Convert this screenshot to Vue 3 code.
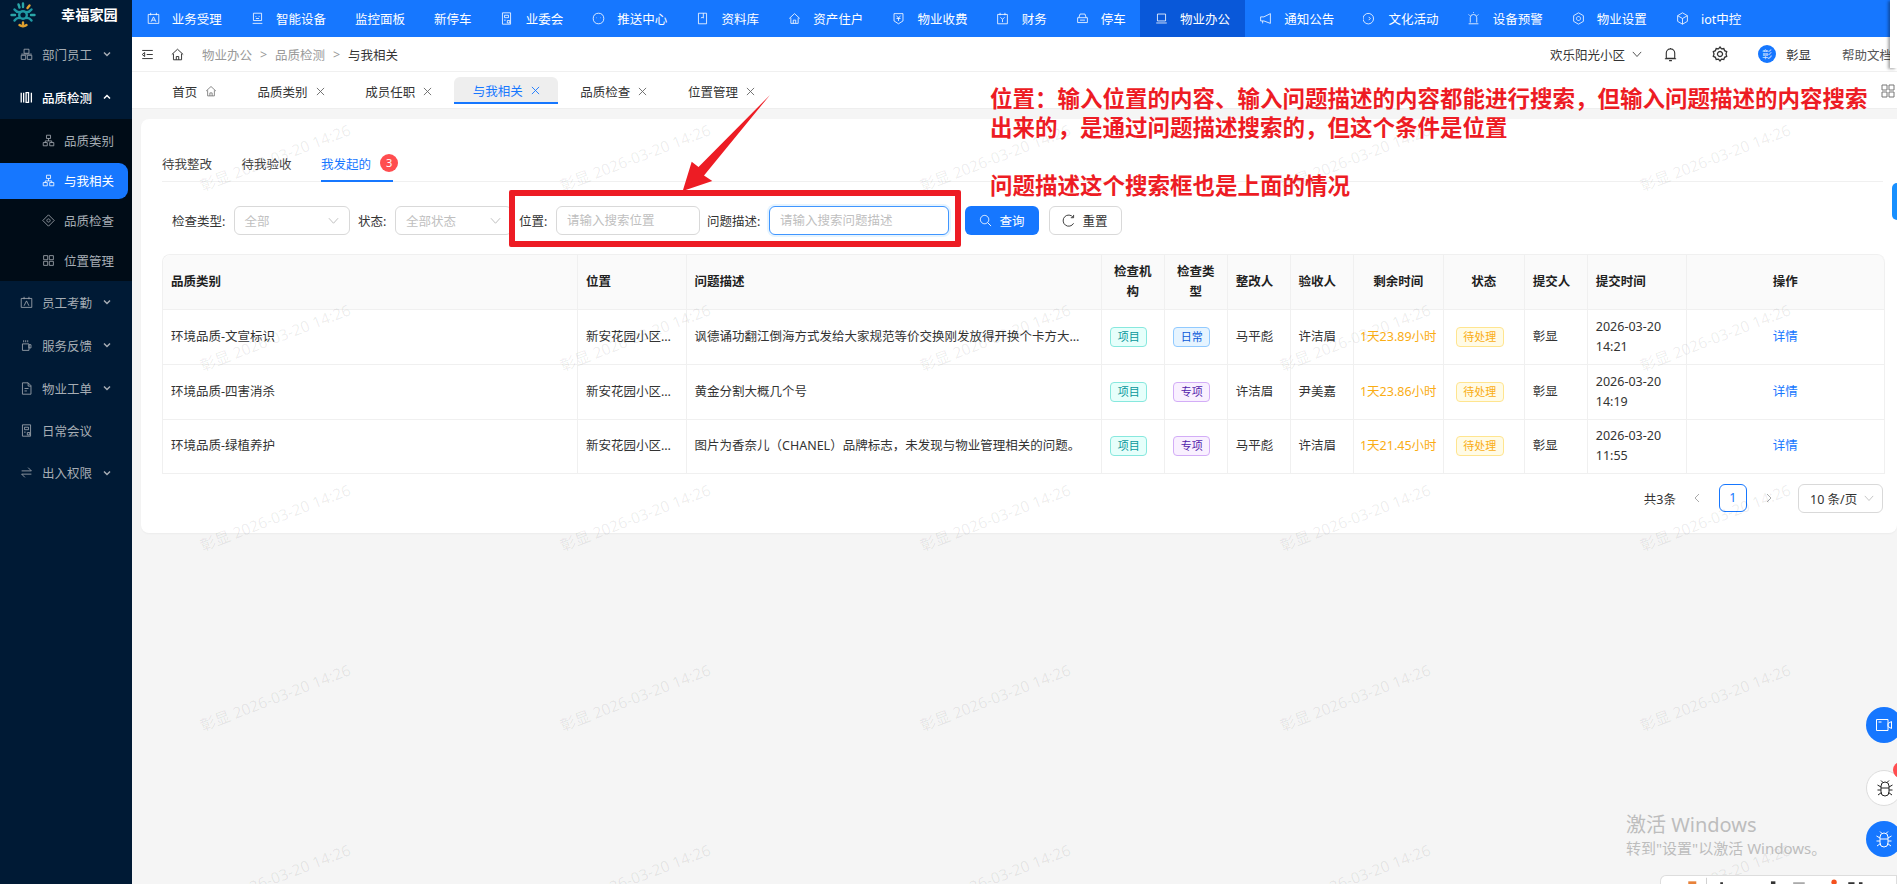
<script setup>
const nav = [
  { t: '业务受理', i: 'cal' }, { t: '智能设备', i: 'face' }, { t: '监控面板' }, { t: '新停车' },
  { t: '业委会', i: 'doc' }, { t: '推送中心', i: 'chat' }, { t: '资料库', i: 'book' }, { t: '资产住户', i: 'home' },
  { t: '物业收费', i: 'yen' }, { t: '财务', i: 'fin' }, { t: '停车', i: 'car' }, { t: '物业办公', i: 'laptop', on: true },
  { t: '通知公告', i: 'horn' }, { t: '文化活动', i: 'shield' }, { t: '设备预警', i: 'alarm' }, { t: '物业设置', i: 'gear' }, { t: 'iot中控', i: 'cube' }
]
const paths = {
  cal: 'M1.5 3h13v11h-13zM4.500 1v3M11.500 1v3M5 12l3-6 3 6M6 10h4',
  face: 'M3 1.500h10v9H3zM6 5v1M10 5v1M6 8h4M2 14h12',
  doc: 'M3 1h10v14H3zM5.500 4h5v3h-5zM9 10.500h3v3H9zM5 10h2',
  chat: 'M8 1.500c4 0 6.500 2.500 6.500 6.500s-2.500 6.500-6.500 6.500S1.500 12 1.500 8 4 1.500 8 1.500zM5.500 7v.5M10.500 7v.5',
  book: 'M3 1.500h10v13H3zM9 1.500v6l-1.500-1-1.500 1',
  home: 'M1.500 8 8 2l6.500 6M3.500 7v7h9V7M6.500 14v-4h3v4',
  yen: 'M2.500 2h11v9l-5.500 3.500L2.500 11zM5.500 4.500 8 7.500l2.500-3M5.500 8h5M8 7.500V11',
  fin: 'M2 3h12v11.500H2zM5 1v3M11 1v3M5.500 6.500 8 9l2.500-2.500M8 9v3.500',
  car: 'M3.500 7 5 2.500h6L12.500 7M2 7h12v6H2zM5 10h6',
  laptop: 'M3 2.500h10v8.500H3zM1.500 13.500h13',
  horn: 'M14 2v12L6 11H2V6h4zM4.500 11v3',
  shield: 'M2 3.500 4.500 2a6.500 6.500 0 1 1-2.500 1.500zM7 6l2 2-2 2',
  alarm: 'M4 13V7a4 4 0 0 1 8 0v6M2 14.500h12M8 1V0M2 3l1.500 1.500M14 3l-1.500 1.500',
  gear: 'M8 1l6 3.500v7L8 15l-6-3.500v-7zM8 5.500a2.500 2.500 0 1 0 .01 0z',
  cube: 'M8 1l6 3.500v7L8 15l-6-3.500v-7zM2 4.500 8 8l6-3.500M8 8v7'
}
const side1 = [
  { t: '部门员工', i: 'M5 1.500h6v5H5zM1.500 9h5.500v5H1.500zM9 9h5.500v5H9zM1.500 7.500h13' }
]
const side2 = [
  { t: '品质类别', i: 'org' }, { t: '与我相关', i: 'org', on: true }, { t: '品质检查', i: 'dia' }, { t: '位置管理', i: 'grid' }
]
const subPaths = {
  org: 'M5.500 1.500h5v4h-5zM8 5.500v3M1.500 10.500h5v4h-5zM9.500 10.500h5v4h-5zM4 10.500v-2h8v2',
  dia: 'M8 1l7 7-7 7-7-7zM8 6a2 2 0 1 0 .01 0z',
  grid: 'M2 2h5v5H2zM9 2h5v5H9zM2 9h5v5H2zM9 9h5v5H9z'
}
const side3 = [
  { t: '员工考勤', i: 'M1.500 3h13v11h-13zM5 1v3M11 1v3M5 12l3-6 3 6', c: true },
  { t: '服务反馈', i: 'M3 6h8v8H3zM11 7h2.500v4H11zM4.500 1.500v2.500M7 1.500v2.500M9.500 1.500v2.500', c: true },
  { t: '物业工单', i: 'M3 1h7l3.500 3.500V15H3zM10 1v4h3.500M5.500 8h5M5.500 11h3', c: true },
  { t: '日常会议', i: 'M3 1h10v14H3zM5.500 4h5v3h-5zM9 10.500h3v3H9zM5 10h2', s: true },
  { t: '出入权限', i: 'M2 6h12L10 2M14 10H2l4 4', c: true }
]
const tabs = [
  { t: '品质类别' }, { t: '成员任职' }, { t: '与我相关', on: true }, { t: '品质检查' }, { t: '位置管理' }
]
const cols = [415, 108.5, 415, 63.3, 63, 62.8, 63.2, 90, 81, 63, 99, 198]
const rows = [
  { c: '环境品质-文宣标识', p: '新安花园小区一期东门', d: '讽德诵功翻江倒海方式发给大家规范等价交换刚发放得开换个卡方大家看法是否会开始', k: '日常', kc: 'blue', a: '马平彪', b: '许洁眉', r: '1天23.89小时', time: '14:21' },
  { c: '环境品质-四害消杀', p: '新安花园小区一期东门', d: '黄金分割大概几个号', k: '专项', kc: 'purple', a: '许洁眉', b: '尹美嘉', r: '1天23.86小时', time: '14:19' },
  { c: '环境品质-绿植养护', p: '新安花园小区一期东门', d: '图片为香奈儿（CHANEL）品牌标志，未发现与物业管理相关的问题。', k: '专项', kc: 'purple', a: '马平彪', b: '许洁眉', r: '1天21.45小时', time: '11:55' }
]
const marks = []
for (const y of [157, 337, 517, 697, 877]) for (const x of [275, 635, 995, 1355, 1715]) marks.push({ x, y })
const markStyle = m => ({ left: m.x + 'px', top: m.y + 'px' })
const noteLines = [
  '位置：输入位置的内容、输入问题描述的内容都能进行搜索，但输入问题描述的内容搜索',
  '出来的，是通过问题描述搜索的，但这个条件是位置',
  '',
  '问题描述这个搜索框也是上面的情况'
]
</script>

<template>
  <div class="app">
    <aside class="side">
      <div class="logo">
        <svg class="logo-mark" viewBox="0 0 26 26">
          <circle cx="13" cy="13" r="3.800" stroke="#1f9aa5" />
          <path d="M4.500 7.500c1.500 2 3 3 5.500 2.500M21.500 7.500c-1.500 2-3 3-5.500 2.500M4.500 18.500c1.500-2 3-3 5.500-2.500M21.500 18.500c-1.500-2-3-3-5.500-2.500" stroke="#1f9aa5" />
          <path d="M13 1.500v3.500M8.500 2.500l1 3M1.500 13H5M21 13h3.500" stroke="#2aa6a8" />
          <path d="M9.500 23c1 .8 2.200 1.200 3.500 1.200s2.500-.4 3.500-1.200" stroke="#e0a030" />
          <path d="M13 20.500v3.500M19.500 3.500l-2 2.500" stroke="#e0a030" />
        </svg>
        <span class="logo-text">幸福家园</span>
      </div>
      <div v-for="m in side1" :key="m.t" class="menu">
        <svg class="micon" viewBox="0 0 16 16"><path :d="m.i" /></svg><span>{{ m.t }}</span>
        <svg class="chev" viewBox="0 0 10 10"><path d="M2 3.500l3 3 3-3" /></svg>
      </div>
      <div class="menu open">
        <svg class="micon bars" viewBox="0 0 16 16"><path d="M1.500 2v12M4.500 2v12M7.500 2v12h3V2zM14 2v12" /></svg><span>品质检测</span>
        <svg class="chev" viewBox="0 0 10 10"><path d="M2 6.500l3-3 3 3" /></svg>
      </div>
      <div class="sub">
        <div v-for="s in side2" :key="s.t" class="sub-item" :class="{ on: s.on }">
          <svg class="micon" viewBox="0 0 16 16"><path :d="subPaths[s.i]" /></svg><span>{{ s.t }}</span>
        </div>
      </div>
      <div v-for="m in side3" :key="m.t" class="menu" :class="{ single: m.s }">
        <svg class="micon" viewBox="0 0 16 16"><path :d="m.i" /></svg><span>{{ m.t }}</span>
        <svg v-if="m.c" class="chev" viewBox="0 0 10 10"><path d="M2 3.500l3 3 3-3" /></svg>
      </div>
    </aside>

    <div class="main">
      <header class="top">
        <div v-for="n in nav" :key="n.t" class="nav" :class="{ on: n.on }">
          <svg v-if="n.i" class="nicon" viewBox="0 0 16 16"><path :d="paths[n.i]" /></svg>
          <span>{{ n.t }}</span>
        </div>
      </header>

      <div class="crumbs">
        <svg class="cicon" viewBox="0 0 16 16"><path d="M1.500 3h13M7 8h7.500M1.500 13h13M1.500 8 4.500 5.500v5z" /></svg>
        <svg class="cicon home" viewBox="0 0 16 16"><path d="M1 8 8 1.500 15 8M3 7v7.500h10V7M6.500 14.500v-4h3v4" /></svg>
        <span class="cr">物业办公</span><span class="sep">&gt;</span>
        <span class="cr">品质检测</span><span class="sep">&gt;</span>
        <span class="cur">与我相关</span>
        <div class="right">
          <span class="tenant">欢乐阳光小区</span>
          <svg class="cdown" viewBox="0 0 12 12"><path d="M1 3.500l5 5.500 5-5.500" /></svg>
          <svg class="bell" viewBox="0 0 16 16"><path d="M3.500 12V6.500a4.500 4.500 0 0 1 9 0V12zM2 12.500h12M6.500 14.500h3M8 1v1" /></svg>
          <svg class="gear" viewBox="0 0 16 16"><path d="M8 1l1.500 1.800 2.300-.3.800 2.200 2.100 1L14 8l.7 2.300-2.100 1-.8 2.200-2.300-.3L8 15l-1.500-1.800-2.300.3-.8-2.200-2.100-1L2 8l-.7-2.300 2.100-1 .8-2.200 2.300.3zM8 5.500a2.500 2.500 0 1 0 .01 0z" /></svg>
          <span class="avatar">彰</span>
          <span class="uname">彰显</span>
          <span class="help">帮助文档</span>
        </div>
      </div>

      <div class="tabs">
        <div class="tab home-tab">
          <span>首页</span>
          <svg class="tab-home" viewBox="0 0 16 16"><path d="M1.500 8 8 2l6.500 6M3.500 7v7.500h9V7M6.500 14.500v-4h3v4" /></svg>
        </div>
        <div v-for="t in tabs" :key="t.t" class="tab" :class="{ on: t.on }">
          <span>{{ t.t }}</span>
          <svg class="tab-x" viewBox="0 0 10 10"><path d="M1 1l8 8M9 1l-8 8" /></svg>
        </div>
        <svg class="tabs-grid" viewBox="0 0 14 14"><path d="M1 1h5v5H1zM8 1h5v5H8zM1 8h5v5H1zM8 8h5v5H8z" /></svg>
      </div>

      <section class="body">
        <div class="card">
          <div class="itabs">
            <span class="itab">待我整改</span>
            <span class="itab">待我验收</span>
            <span class="itab on">我发起的<b class="badge">3</b></span>
          </div>

          <div class="filters">
            <label class="lab l1">检查类型:</label>
            <div class="ctl sel s1"><span>全部</span><svg viewBox="0 0 12 12"><path d="M1 3.500l5 5.500 5-5.500" /></svg></div>
            <label class="lab l2">状态:</label>
            <div class="ctl sel s2"><span>全部状态</span><svg viewBox="0 0 12 12"><path d="M1 3.500l5 5.500 5-5.500" /></svg></div>
            <label class="lab l3">位置:</label>
            <input class="ctl inp i1" placeholder="请输入搜索位置" />
            <label class="lab l4">问题描述:</label>
            <input class="ctl inp i2 focus" placeholder="请输入搜索问题描述" />
            <button class="btn primary">
              <svg viewBox="0 0 14 14"><path d="M6 1.500a4.500 4.500 0 1 0 .01 0zM9.500 9.500l3.500 3.500" /></svg>查询
            </button>
            <button class="btn reset">
              <svg viewBox="0 0 14 14"><path d="M12 3.500A6 6 0 1 0 12.500 10M12.500 1v3h-3" /></svg>重置
            </button>
          </div>

          <table class="tbl">
            <colgroup><col v-for="(c, i) in cols" :key="i" :style="{ width: c + 'px' }" /></colgroup>
            <thead>
              <tr>
                <th>品质类别</th><th>位置</th><th>问题描述</th><th class="c">检查机构</th><th class="c">检查类型</th>
                <th>整改人</th><th>验收人</th><th class="c">剩余时间</th><th class="c">状态</th><th>提交人</th><th>提交时间</th><th class="c">操作</th>
              </tr>
            </thead>
            <tbody>
              <tr v-for="r in rows" :key="r.c">
                <td>{{ r.c }}</td>
                <td class="el">{{ r.p }}</td>
                <td class="el desc">{{ r.d }}</td>
                <td class="c"><span class="tag teal">项目</span></td>
                <td class="c"><span class="tag" :class="r.kc">{{ r.k }}</span></td>
                <td>{{ r.a }}</td>
                <td>{{ r.b }}</td>
                <td class="c remain">{{ r.r }}</td>
                <td class="c"><span class="tag gold">待处理</span></td>
                <td>彰显</td>
                <td>2026-03-20 {{ r.time }}</td>
                <td class="c link">详情</td>
              </tr>
            </tbody>
          </table>

          <div class="pager">
            <span class="total">共3条</span>
            <svg class="pg-arrow prev" viewBox="0 0 10 10"><path d="M7 1L3 5l4 4" /></svg>
            <span class="page">1</span>
            <svg class="pg-arrow next" viewBox="0 0 10 10"><path d="M3 1l4 4-4 4" /></svg>
            <div class="size"><span>10 条/页</span><svg viewBox="0 0 12 12"><path d="M1 3.500l5 5.500 5-5.500" /></svg></div>
          </div>
        </div>
      </section>
    </div>

    <div class="marks">
      <span v-for="m in marks" :key="m.x + '-' + m.y" class="mark" :style="markStyle(m)">彰显 2026-03-20 14:26</span>
    </div>

    <div class="note">
      <div v-for="(l, i) in noteLines" :key="i" class="note-line">{{ l }}</div>
    </div>
    <div class="redbox"></div>
    <svg class="arrow" viewBox="0 0 100 100"><polygon points="90,0 18.500,72 11.700,66.700 2.700,96 32.300,86 24,80.500" /></svg>

    <div class="edge"></div>
    <div class="bluetab"></div>

    <div class="fab blue f1">
      <svg viewBox="0 0 18 18"><path d="M1.500 3.500h11.500v11H1.500zM13 7.500l3.500-2v7l-3.500-2zM3.500 6h3" /></svg>
    </div>
    <div class="fab white f2">
      <svg viewBox="0 0 18 18"><path d="M5 7a4 4 0 0 1 8 0v6a4 4 0 0 1-8 0zM5 9h8M1.500 6 5 8M16.500 6 13 8M1.500 11H5M16.500 11H13M2 16l3.500-2.500M16 16l-3.500-2.500M6.500 3 5 1.500M11.500 3 13 1.500" /></svg>
    </div>
    <div class="dot"></div>
    <div class="fab blue f3">
      <svg viewBox="0 0 18 18"><path d="M5 7a4 4 0 0 1 8 0v6a4 4 0 0 1-8 0zM5 9h8M1.500 6 5 8M16.500 6 13 8M1.500 11H5M16.500 11H13M2 16l3.500-2.500M16 16l-3.500-2.500M6.500 3 5 1.500M11.500 3 13 1.500" /></svg>
    </div>

    <div class="activate">
      <div class="a1">激活 Windows</div>
      <div class="a2">转到"设置"以激活 Windows。</div>
    </div>
    <svg class="tray" viewBox="0 0 237 9">
      <rect class="t-o" x="17" y="6" width="9" height="3" />
      <rect class="t-d" x="37" y="2" width="1" height="7" />
      <rect class="t-k" x="53" y="7" width="3" height="2" />
      <rect class="t-k" x="110" y="6" width="5" height="3" />
      <rect class="t-g" x="135" y="7" width="13" height="2" />
      <circle class="t-r" cx="181" cy="7" r="3" />
      <rect class="t-k" x="197" y="7" width="7" height="2" />
      <rect class="t-k" x="209" y="7" width="4" height="2" />
    </svg>
  </div>
</template>

<style>
html, body { margin: 0; padding: 0; background: #f5f5f5; overflow: hidden; }
</style>

<style scoped>
.app {
  position: relative;
  display: flex;
  width: 1897px;
  height: 884px;
  overflow: hidden;
  background: #f5f5f5;
  font-family: "Noto Sans", "Noto Sans CJK SC", sans-serif;
  font-size: 12.5px;
  color: #1f1f1f;
}
svg { display: block; fill: none; stroke: currentColor; stroke-width: 1; flex: none; }

/* side */
.side { position: relative; z-index: 3; flex: none; width: 132px; background: #001a35; color: #a6adb4; }
.logo { display: flex; align-items: flex-start; height: 32.5px; padding-left: 10px; }
.logo-mark { width: 26px; height: 26px; margin-top: 2px; stroke-width: 2.4; stroke-linecap: round; }
.logo-text { margin-left: 25px; font-size: 14.2px; font-weight: 700; color: #fff; line-height: 30px; }
.menu { display: flex; align-items: center; height: 43px; padding-left: 20px; }
.menu.open { color: #fff; font-weight: 500; }
.menu.single { height: 41.5px; }
.micon { width: 13px; height: 13px; margin-right: 9px; }
.bars { stroke-width: 1.6; }
.chev { width: 10px; height: 10px; margin-left: 10px; stroke-width: 1.5; }
.sub { background: #000c17; height: 162px; padding-top: 2px; box-sizing: border-box; }
.sub-item { display: flex; align-items: center; height: 40px; padding-left: 42px; margin-right: 4px; }
.sub-item.on { height: 36px; margin: 2px 4px 2px 0; background: #1677ff; color: #fff; border-radius: 0 9px 9px 0; }

/* main */
.main { flex: 1; min-width: 0; display: flex; flex-direction: column; }
.top { display: flex; height: 37px; background: #1677ff; color: #fff; }
.nav { display: flex; align-items: center; padding: 0 14.5px; gap: 12.2px; white-space: nowrap; }
.nav.on { background: #0958d9; }
.nicon { width: 13px; height: 13px; }

.crumbs { position: relative; display: flex; align-items: center; height: 35px; background: #fff; border-bottom: 1px solid #f0f0f0; box-sizing: border-box; padding-left: 9px; color: #999; }
.cicon { width: 13px; height: 13px; color: #333; margin-right: 17px; stroke-width: 1.2; }
.cicon.home { margin-right: 18px; }
.cr { width: 50px; }
.sep { width: 23px; text-align: center; color: #999; }
.cur { color: #333; }
.right { margin-left: auto; display: flex; align-items: center; color: #333; }
.tenant { width: 76px; white-space: nowrap; }
.cdown { width: 10px; height: 10px; margin-left: 6px; }
.bell { width: 15px; height: 15px; margin-left: 20.5px; stroke-width: 1.2; }
.gear { width: 16px; height: 16px; margin-left: 34px; stroke-width: 1.3; }
.avatar { width: 18px; height: 18px; margin-left: 30.5px; border-radius: 50%; background: #1677ff; color: #cfe2ff; font-size: 10px; text-align: center; line-height: 18px; flex: none; }
.uname { margin-left: 10px; width: 25px; white-space: nowrap; }
.help { margin-left: 31px; color: #555; width: 55px; white-space: nowrap; }

.tabs { position: relative; display: flex; align-items: center; height: 37px; background: #fff; border-bottom: 1px solid #eee; box-sizing: border-box; padding-left: 22px; gap: 3.6px; color: #333; }
.tab { display: flex; align-items: center; justify-content: center; gap: 8px; width: 104px; height: 27px; padding-top: 2px; box-sizing: border-box; border-radius: 6px 6px 0 0; }
.home-tab { width: 81.5px; }
.tab.on { background: #eeeeee; color: #1677ff; border-bottom: 2px solid #1677ff; }
.tab-x { width: 9px; height: 9px; color: #666; }
.tab.on .tab-x { color: #1677ff; }
.tab-home { width: 12px; height: 12px; color: #666; }
.tabs-grid { position: absolute; right: 2px; top: 12px; width: 14px; height: 14px; color: #777; }

.body { flex: 1; padding: 10px 0 0 9px; box-sizing: border-box; }
.card { background: #fff; border-radius: 8px 0 8px 8px; height: 414px; padding: 0 14px 0 21px; box-sizing: border-box; box-shadow: 0 1px 2px rgba(0,0,0,.04); }

.itabs { display: flex; height: 62px; align-items: flex-end; border-bottom: 1px solid #f0f0f0; box-sizing: content-box; gap: 29.5px; color: #444; }
.itab { display: flex; align-items: center; height: 28px; padding-bottom: 10px; box-sizing: border-box; margin-bottom: -1px; }
.itab.on { color: #1677ff; border-bottom: 2px solid #1677ff; padding-bottom: 8px; }
.badge { margin-left: 9px; margin-right: -5px; width: 18px; height: 18px; border-radius: 50%; background: #ff4d4f; color: #fff; font-size: 11px; font-weight: 400; text-align: center; line-height: 18px; }

.filters { display: flex; align-items: center; height: 29px; margin-top: 24px; padding-left: 10px; }
.lab { flex: none; color: #333; white-space: nowrap; }
.ctl { flex: none; box-sizing: border-box; height: 29px; border: 1px solid #d9d9d9; border-radius: 6px; background: #fff; font: inherit; color: #bfbfbf; }
.sel { display: flex; align-items: center; justify-content: space-between; width: 116.5px; padding: 0 10px; }
.sel svg { width: 11px; height: 11px; color: #bbb; }
.l1 { width: 55px; }
.s1 { margin-left: 6.5px; }
.l2 { width: 30px; margin-left: 8px; }
.s2 { margin-left: 7px; }
.l3 { width: 31px; margin-left: 7.5px; }
.inp { outline: none; padding: 0 10px; }
.inp::placeholder { color: #bfbfbf; }
.i1 { width: 144px; margin-left: 6px; }
.l4 { width: 55px; margin-left: 7px; }
.i2 { width: 180px; margin-left: 7px; }
.focus { border-color: #4096ff; box-shadow: 0 0 0 2px rgba(5,145,255,.1); }
.btn { flex: none; display: flex; align-items: center; justify-content: center; gap: 7px; height: 29px; box-sizing: border-box; border: 1px solid #d9d9d9; border-radius: 6px; background: #fff; color: #333; font: inherit; padding: 0; }
.btn svg { width: 13px; height: 13px; }
.reset { width: 73px; margin-left: 9.5px; }
.primary { width: 74px; margin-left: 16px; border: 0; background: #1677ff; color: #fff; }

.tbl { table-layout: fixed; border-collapse: separate; border-spacing: 0; width: 1721px; margin-top: 18.5px; border: 1px solid #f0f0f0; border-width: 1px 0 0 1px; border-radius: 8px 8px 0 0; box-sizing: border-box; }
.tbl th, .tbl td { box-sizing: border-box; padding: 0 8px; border-right: 1px solid #f0f0f0; border-bottom: 1px solid #f0f0f0; line-height: 20px; text-align: left; font-weight: 400; color: #333; }
.tbl th { height: 55px; background: #fafafa; font-weight: 600; color: #1f1f1f; }
.tbl th:first-child { border-top-left-radius: 8px; }
.tbl th:last-child { border-top-right-radius: 8px; }
.tbl td { height: 55px; }
.tbl tr:last-child td { height: 54px; }
.tbl .c { text-align: center; }
.el { white-space: nowrap; overflow: hidden; text-overflow: ellipsis; }
.tbl .desc { padding-right: 15px; }
.tbl .remain { color: #faad14; padding: 0; }
.tbl .link { color: #1677ff; }
.tag { display: inline-block; box-sizing: border-box; height: 20px; line-height: 18px; padding: 0 6.5px; margin-right: 8px; font-size: 11px; border: 1px solid; border-radius: 4px; vertical-align: middle; }
.teal { color: #08979c; background: #e6fffb; border-color: #87e8de; }
.blue { color: #0958d9; background: #e6f4ff; border-color: #91caff; }
.purple { color: #531dab; background: #f9f0ff; border-color: #d3adf7; }
.gold { color: #faad14; background: #fffbe6; border-color: #ffe58f; }

.pager { display: flex; align-items: center; justify-content: flex-end; height: 29px; margin-top: 10px; }
.total { color: #333; margin-right: 15.5px; }
.pg-arrow { width: 10px; height: 10px; color: #aaa; }
.page { width: 28.5px; height: 28.5px; margin: 0 17px; box-sizing: border-box; border: 1px solid #1677ff; border-radius: 6px; color: #1677ff; text-align: center; line-height: 26.5px; }
.size { display: flex; align-items: center; justify-content: space-between; box-sizing: border-box; width: 85px; height: 29px; margin-left: 24px; padding: 0 8px 0 11px; border: 1px solid #d9d9d9; border-radius: 6px; color: #333; }
.size svg { width: 10px; height: 10px; color: #bbb; }

/* overlays */
.marks { position: absolute; inset: 0; z-index: 1; pointer-events: none; }
.mark { position: absolute; transform: translate(-50%, -50%) rotate(-21deg); white-space: nowrap; font-size: 15.5px; color: rgba(0,0,0,.075); }
.note { position: absolute; z-index: 4; left: 990px; top: 84px; white-space: nowrap; font-size: 22.5px; line-height: 29px; font-weight: 700; color: #ed1c24; }
.note-line { height: 29px; }
.redbox { position: absolute; z-index: 4; left: 509px; top: 190px; width: 452px; height: 57px; box-sizing: border-box; border: 6px solid #ed1c24; border-radius: 2px; }
.arrow { position: absolute; z-index: 4; left: 680px; top: 95px; width: 100px; height: 100px; }
.arrow polygon { fill: #ed1c24; stroke: none; }
.edge { position: absolute; z-index: 5; right: 0; top: 0; width: 7px; height: 68px; background: #fff; box-shadow: -2px 1px 3px rgba(0,0,0,.35); }
.bluetab { position: absolute; z-index: 5; right: 0; top: 183px; width: 5px; height: 37px; background: #1890ff; border-radius: 6px 0 0 6px; }
.fab { position: absolute; z-index: 5; left: 1866px; width: 36px; height: 36px; box-sizing: border-box; border-radius: 50%; display: flex; align-items: center; padding-left: 9px; }
.fab svg { width: 18px; height: 18px; }
.fab.blue { background: #1677ff; color: #fff; border: 0; }
.fab.white { background: #fff; color: #222; border: 1px solid #ddd; }
.f1 { top: 707px; }
.f2 { top: 770px; }
.f3 { top: 821px; }
.dot { position: absolute; z-index: 6; left: 1893px; top: 762px; width: 16px; height: 16px; border-radius: 50%; background: #ff4d4f; }
.activate { position: absolute; z-index: 5; left: 1626px; top: 811px; color: #bdbdbd; white-space: nowrap; }
.a1 { font-size: 20px; line-height: 27px; }
.a2 { font-size: 15px; line-height: 20px; }
.tray { position: absolute; z-index: 5; left: 1660px; top: 875px; width: 237px; height: 9px; background: #fff; border: 1px solid #ddd; border-bottom: 0; box-sizing: border-box; border-radius: 6px 0 0 0; stroke: none; }
.t-o { fill: #e8823a; }
.t-d { fill: #ccc; }
.t-k { fill: #333; }
.t-g { fill: #aaa; }
.t-r { fill: #f4511e; }
</style>
